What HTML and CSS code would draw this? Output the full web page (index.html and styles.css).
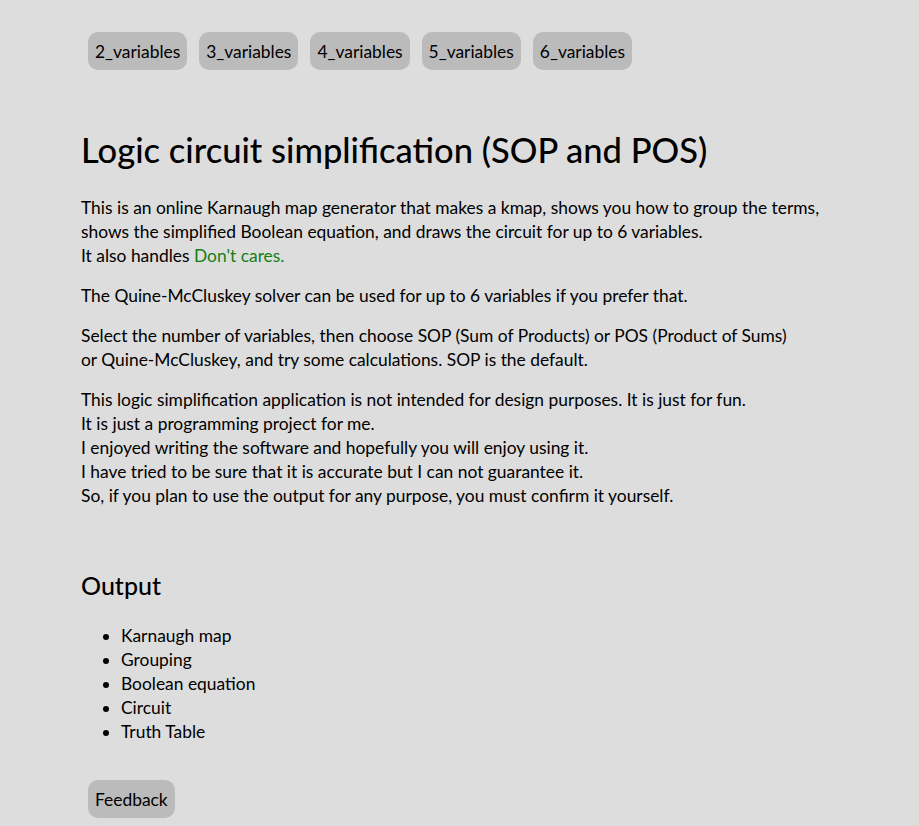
FILE: index.html
```html
<!DOCTYPE html>
<html>
<head>
<meta charset="utf-8">
<link rel="stylesheet" href="styles.css">
</head>
<body>
<div class="page">
  <nav class="nav">
    <a class="btn">2_variables</a>
    <a class="btn">3_variables</a>
    <a class="btn">4_variables</a>
    <a class="btn">5_variables</a>
    <a class="btn">6_variables</a>
  </nav>
  <h1 class="title">Logic circuit simplification (SOP and POS)</h1>
  <p class="text">This is an online Karnaugh map generator that makes a kmap, shows you how to group the terms,<br>shows the simplified Boolean equation, and draws the circuit for up to 6 variables.<br>It also handles <span class="green">Don't cares.</span></p>
  <p class="text">The Quine-McCluskey solver can be used for up to 6 variables if you prefer that.</p>
  <p class="text">Select the number of variables, then choose SOP (Sum of Products) or POS (Product of Sums)<br>or Quine-McCluskey, and try some calculations. SOP is the default.</p>
  <p class="text">This logic simplification application is not intended for design purposes. It is just for fun.<br>It is just a programming project for me.<br>I enjoyed writing the software and hopefully you will enjoy using it.<br>I have tried to be sure that it is accurate but I can not guarantee it.<br>So, if you plan to use the output for any purpose, you must confirm it yourself.</p>
  <h2 class="subtitle">Output</h2>
  <ul class="list">
    <li>Karnaugh map</li>
    <li>Grouping</li>
    <li>Boolean equation</li>
    <li>Circuit</li>
    <li>Truth Table</li>
  </ul>
  <div class="footer">
    <a class="btn">Feedback</a>
  </div>
</div>
</body>
</html>
```
FILE: styles.css
```css
html, body {
  margin: 0;
  padding: 0;
  background: #dddddd;
}
body {
  font-family: Lato, "Open Sans", sans-serif;
  color: #000;
  font-size: 17.4px;
  line-height: 24px;
}
.page {
  padding: 32px 0 0 81px;
}
.nav {
  display: flex;
  gap: 12px;
  padding-left: 7px;
}
.btn {
  display: inline-block;
  background: #bbbbbb;
  border-radius: 10px;
  padding: 8px 7px 6px;
  font-size: 17.4px;
  line-height: 24px;
  color: #000;
  text-decoration: none;
}
.title {
  font-size: 34.5px;
  font-weight: 500;
  line-height: 44px;
  margin: 58px 0 24px;
}
.text {
  margin: 0 0 16px;
}
.green {
  color: #148014;
}
.subtitle {
  font-size: 25px;
  font-weight: 500;
  line-height: 32px;
  margin: 61px 0 23px;
}
.list {
  margin: 0;
  padding-left: 40px;
}
.footer {
  padding: 36px 0 0 7px;
}
```
